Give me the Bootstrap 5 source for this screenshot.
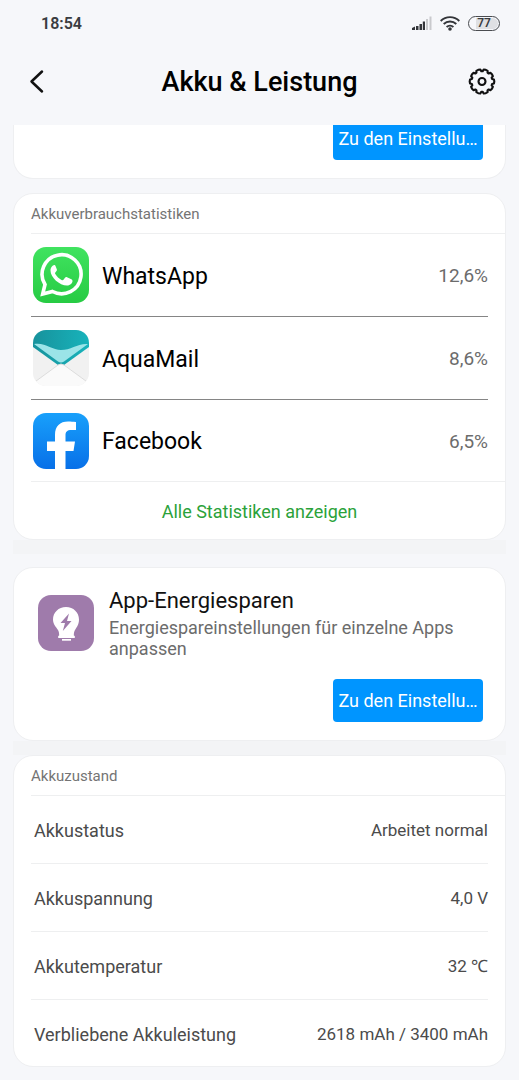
<!DOCTYPE html>
<html lang="de">
<head>
<meta charset="utf-8">
<meta name="viewport" content="width=device-width, initial-scale=1">
<title>Akku &amp; Leistung</title>
<link rel="stylesheet" href="https://cdn.jsdelivr.net/npm/bootstrap@5.3.0/dist/css/bootstrap.min.css">
<style>
body { background: #f6f7fa; color: #000; font-family: Roboto, "Noto Sans", sans-serif; font-size: 18px; line-height: 21px; }
.status-bar { height: 46px; padding: 0 19px 0 41px; color: #3a3c40; font-size: 16px; font-weight: 600; }
.battery { width: 32px; height: 15px; border: 1px solid #4a4c50; border-radius: 8px; font-size: 12px; line-height: 13px; background: linear-gradient(90deg, #f6f7fa 24%, #dfe0e3 24%); box-shadow: inset 0 0 0 1px #f6f7fa; }
.title-bar { height: 79px; padding: 0 23px 8px; }
.title-bar h1 { font-size: 27px; line-height: 36px; font-weight: 500; }
.icon-btn { width: 28px; height: 28px; color: #111; }
main { padding: 0 13px 14px; }
.panel { background: #fff; border: 1px solid #eeeff1; border-radius: 20px; }
.panel-cut { border-top: 0; border-radius: 0 0 20px 20px; padding: 0 22px 18px; overflow: hidden; }
.panel-cut .clip { height: 35px; overflow: hidden; }
.gap-strip { height: 14px; background: #f3f4f6; }
.gap-plain { height: 14px; }
.gap-strip + .gap-plain { height: 13px; }
.panel-title { margin: 0 0 0 17px; padding: 10px 0 9px; border-bottom: 1px solid #eeeff0; color: #747474; font-size: 15px; font-weight: 400; line-height: 20px; }
.app-row { height: 83px; margin: 0 17px; padding-left: 2px; gap: 13px; color: #000; border-bottom: 1px solid #858585; }
.app-row:last-of-type { border-bottom: 0; height: 81px; }
.app-row svg, .saver svg { width: 56px; height: 56px; flex: none; }
.app-name { padding-top: 3px; font-size: 23px; line-height: 28px; }
.app-share { padding-top: 1px; color: #6c6c6c; font-size: 19px; }
.all-stats { display: block; margin-left: 17px; padding: 19px 17px 16px 0; border-top: 1px solid #eeeff0; color: #2ba23a; line-height: 22px; }
.saver { padding: 19px 22px 18px 24px; }
.saver h2 { margin: 0; font-size: 22px; line-height: 28px; font-weight: 400; color: #111; }
.saver p { margin: 2px 0 0; color: #6c6c6c; }
.saver-text { margin-left: 15px; }
.saver-action { margin-top: 20px; }
.btn-settings { --bs-btn-color: #fff; --bs-btn-bg: #0095ff; --bs-btn-hover-color: #fff; --bs-btn-hover-bg: #0084e6; --bs-btn-active-bg: #0078d2; width: 150px; height: 43px; padding: 0; border: 0; border-radius: 4px; font-size: 18px; line-height: 44px; white-space: nowrap; }
.facts { margin: 0 17px; }
.facts > div { height: 68px; padding: 2px 0 0 3px; border-bottom: 1px solid #eeeff0; color: #4b4b4b; }
.facts > div:last-child { border-bottom: 0; height: 66px; }
.facts dt { font-weight: 400; }
.facts dd { margin: 0; font-size: 17px; }
</style>
</head>
<body>
<div class="status-bar d-flex align-items-center justify-content-between">
  <span>18:54</span>
  <div class="d-flex align-items-center">
    <svg width="20" height="14" viewBox="0 0 20 14" role="img" aria-label="Mobilfunk"><path fill="#333539" d="M0 14v-2l3-1.400V14zM4 10h2.500v4H4zM7.500 8H10v6H7.500zM10.800 5.500H13V14h-2.200z"/><path fill="#c9cacd" d="M14 3h2v11h-2zM17.500 0.500h2V14h-2z"/></svg>
    <svg class="ms-2 me-2" width="20" height="15" viewBox="0 0 20 15" fill="none" stroke="#333539" stroke-width="1.900" role="img" aria-label="WLAN"><path d="M.7 5a13.200 13.200 0 0 1 18.600 0M3.700 8a9 9 0 0 1 12.600 0M6.600 11a5 5 0 0 1 6.800 0"/><circle cx="10" cy="13" r="1.800" fill="#333539" stroke="none"/></svg>
    <span class="battery text-center">77</span>
  </div>
</div>
<header class="title-bar d-flex align-items-center justify-content-between">
  <button type="button" class="btn icon-btn p-0 border-0 d-flex" aria-label="Zurück"><svg width="28" height="28" viewBox="0 0 28 28" fill="none" stroke="currentColor" stroke-width="2.500" stroke-linecap="round" stroke-linejoin="round"><path d="M19 3.500 8.500 13.500 19 23.500"/></svg></button>
  <h1 class="m-0">Akku &amp; Leistung</h1>
  <button type="button" class="btn icon-btn p-0 border-0 d-flex" aria-label="Einstellungen"><svg width="28" height="28" viewBox="0 0 28 28" fill="none" stroke="currentColor" stroke-width="2.100" stroke-linejoin="round"><path id="gear"/><circle cx="14" cy="13.500" r="3.500"/></svg></button>
</header>
<main>
  <section class="panel panel-cut">
    <div class="clip d-flex justify-content-end align-items-end"><button type="button" class="btn btn-settings flex-shrink-0">Zu den Einstellu…</button></div>
  </section>
  <div class="gap-plain"></div>
  <section class="panel">
    <h2 class="panel-title">Akkuverbrauchstatistiken</h2>
    <div class="app-row d-flex align-items-center">
      <svg viewBox="0 0 56 56"><defs><linearGradient id="wa" x2="0" y2="1"><stop stop-color="#40e35f"/><stop offset="1" stop-color="#27cb43"/></linearGradient></defs><rect width="56" height="56" rx="13" fill="url(#wa)"/><path d="M9.700 47 12 37.500A19.500 19.500 0 1 1 19.500 44.500z" fill="none" stroke="#fff" stroke-width="3.600"/><path fill="#fff" d="M21.500 18c-1.500 0-4 2.200-4 5.500 0 7 9 15 16.500 15 3.500 0 5.500-2.500 5.500-4.500 0-1-.4-1.400-1.200-1.800l-4.300-2c-.8-.4-1.400-.2-2 .5l-1.500 2c-.5.600-1.200.600-2 .2-2.500-1.200-4.700-3.200-6.200-5.800-.4-.8-.3-1.200.2-1.800l1.200-1.600c.3-.5.300-1 .1-1.500L22.500 19c-.3-.7-.5-1-1-1z"/></svg>
      <span class="app-name">WhatsApp</span><span class="app-share ms-auto">12,6%</span>
    </div>
    <div class="app-row d-flex align-items-center">
      <svg viewBox="0 0 56 56"><defs><clipPath id="tile"><rect width="56" height="56" rx="13"/></clipPath><linearGradient id="aq"><stop stop-color="#17929c"/><stop offset="1" stop-color="#18b3bb"/></linearGradient></defs><g clip-path="url(#tile)"><path fill="#f1f1f1" d="M0 0h56v56H0z"/><path fill="url(#aq)" d="M0 0h56v17L31 35q-3 2-6 0L0 17z"/><path fill="#9be4e8" d="M1 14c11-2 18 6 27 6 10 0 17-7 27-6L31 31.500q-3 2-6 0z"/><path fill="#fafafa" stroke="#dcdcdc" d="M-1 54 25 35q3-2 6 0l26 19v6H-1z"/></g></svg>
      <span class="app-name">AquaMail</span><span class="app-share ms-auto">8,6%</span>
    </div>
    <div class="app-row d-flex align-items-center">
      <svg viewBox="0 0 56 56"><defs><linearGradient id="fb" x2="0" y2="1"><stop stop-color="#18a0fb"/><stop offset="1" stop-color="#0870e8"/></linearGradient></defs><rect width="56" height="56" rx="13" fill="url(#fb)"/><path fill="#fff" d="M22 56V38h-8v-9.500h8V22c0-9 5-13.500 13-13.500 3 0 5 .2 8 .6v8h-4.500c-4.500 0-6 2-6 5v6.400H42L40.500 38h-8v18z"/></svg>
      <span class="app-name">Facebook</span><span class="app-share ms-auto">6,5%</span>
    </div>
    <a href="#" class="all-stats text-center text-decoration-none">Alle Statistiken anzeigen</a>
  </section>
  <div class="gap-strip"></div>
  <div class="gap-plain"></div>
  <section class="panel saver">
    <div class="d-flex align-items-start">
      <svg class="mt-2" viewBox="0 0 56 56"><rect width="56" height="56" rx="13" fill="#9f7bab"/><path fill="#fff" fill-rule="evenodd" d="M28 12c7.500 0 13 5.500 13 12.500 0 5-2.200 7.500-4 10.500-.9 1.500-1.200 3.500-1.200 5.500l1 .5v2H20.200v-2l1-.5c0-2-.3-4-1.200-5.500-1.800-3-5-5.500-5-10.500C15 17.500 20.500 12 28 12zm3 6.500-8.500 9.500h4.500l-2.200 8L33.500 26H29z"/><path fill="#fff" d="M24 44h9v1.700h-9z"/></svg>
      <div class="saver-text"><h2>App-Energiesparen</h2><p>Energiespareinstellungen für einzelne Apps anpassen</p></div>
    </div>
    <div class="saver-action d-flex justify-content-end"><button type="button" class="btn btn-settings">Zu den Einstellu…</button></div>
  </section>
  <div class="gap-strip"></div>
  <section class="panel">
    <h2 class="panel-title">Akkuzustand</h2>
    <dl class="facts mb-0">
      <div class="d-flex align-items-center justify-content-between"><dt>Akkustatus</dt><dd>Arbeitet normal</dd></div>
      <div class="d-flex align-items-center justify-content-between"><dt>Akkuspannung</dt><dd>4,0 V</dd></div>
      <div class="d-flex align-items-center justify-content-between"><dt>Akkutemperatur</dt><dd>32 ℃</dd></div>
      <div class="d-flex align-items-center justify-content-between"><dt>Verbliebene Akkuleistung</dt><dd>2618 mAh / 3400 mAh</dd></div>
    </dl>
  </section>
</main>
<script src="https://cdn.jsdelivr.net/npm/bootstrap@5.3.0/dist/js/bootstrap.bundle.min.js"></script>
<script>
// Ten-toothed gear outline for the settings button
const points = [];
for (let i = 0; i < 10; i++) {
  for (const [turn, r] of [[-10, 12.1], [0, 12.3], [10, 12.1], [14, 10.4], [22, 10.4]]) {
    const a = (i * 36 + 18 + turn) * Math.PI / 180;
    points.push((14 + r * Math.sin(a)).toFixed(2) + ' ' + (13.5 - r * Math.cos(a)).toFixed(2));
  }
}
document.getElementById('gear').setAttribute('d', 'M' + points.join('L') + 'z');
</script>
</body>
</html>
